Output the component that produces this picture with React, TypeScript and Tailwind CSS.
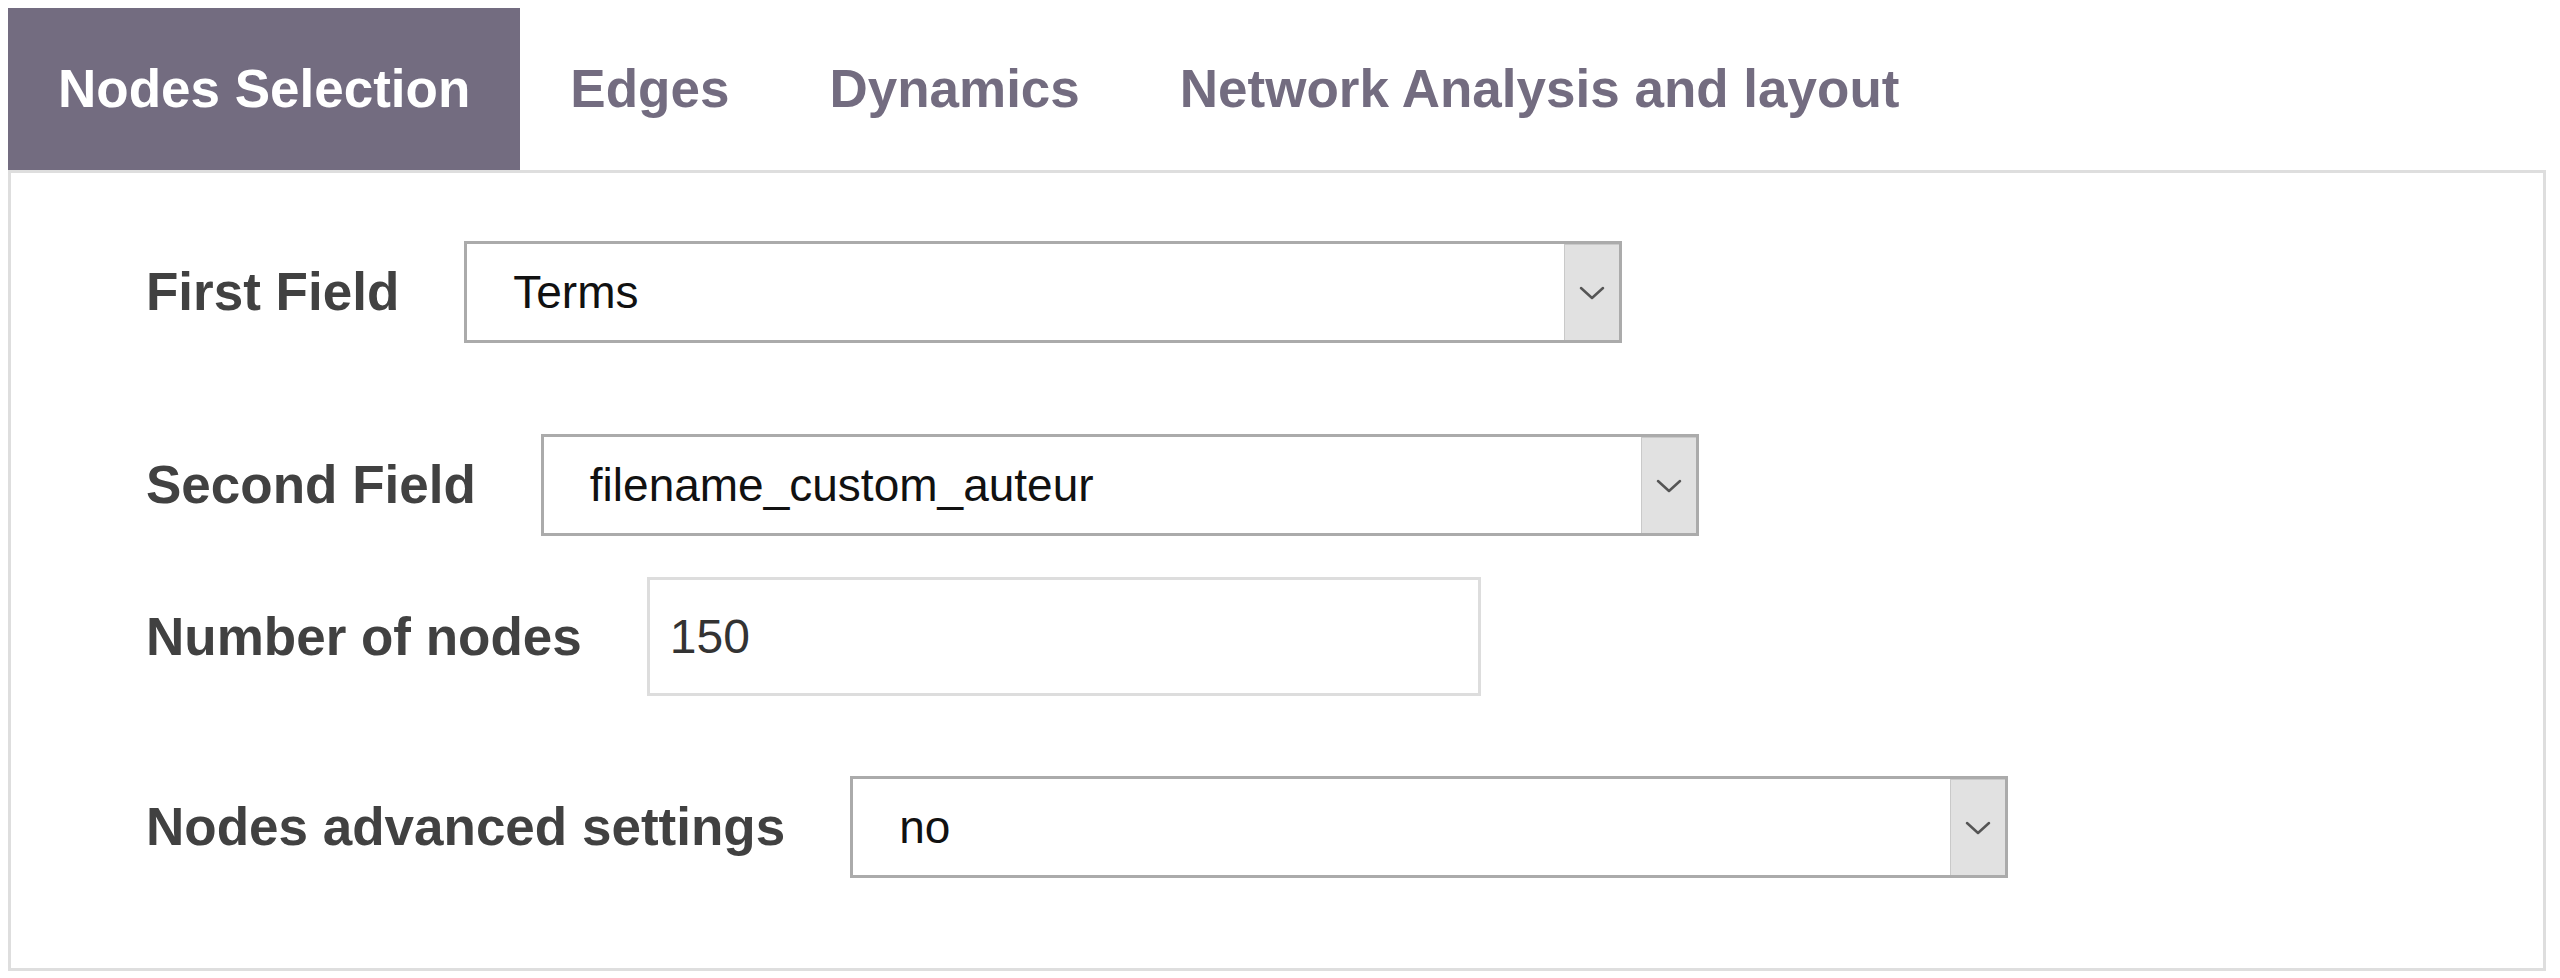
import React from "react";

const font = { fontFamily: '"Liberation Sans", Arial, sans-serif' };

function Chevron() {
  return (
    <svg width="28" height="16" viewBox="0 0 28 16" fill="none">
      <path d="M3 3 L14 13 L25 3" stroke="#555555" strokeWidth="2.5" strokeLinecap="round" strokeLinejoin="round" />
    </svg>
  );
}

function Select({ value }: { value: string }) {
  return (
    <div className="flex h-[102px] w-[1158px] border-[3px] border-[#ababab] bg-white">
      <div className="flex flex-1 items-center pl-[46px] text-[46px] text-[#111111]">{value}</div>
      <div className="flex h-full w-[55px] items-center justify-center border-l border-t border-[#c9c9c9] bg-[#e1e1e1]">
        <Chevron />
      </div>
    </div>
  );
}

function Label({ children }: { children: React.ReactNode }) {
  return <div className="text-[53px] font-bold text-[#414141] whitespace-nowrap">{children}</div>;
}

export default function App() {
  const tabs = ["Nodes Selection", "Edges", "Dynamics", "Network Analysis and layout"];
  return (
    <div className="min-h-[978px] w-full bg-white pl-[8px] pt-[8px]" style={font}>
      <div className="flex h-[162px]">
        {tabs.map((t, i) => (
          <div
            key={t}
            className={
              i === 0
                ? "flex items-center bg-[#736c80] px-[50px] text-[53px] font-bold text-white whitespace-nowrap"
                : "flex items-center px-[50px] text-[53px] font-bold text-[#736c80] whitespace-nowrap"
            }
          >
            {t}
          </div>
        ))}
      </div>
      <div className="w-[2538px] border-[3px] border-[#dedede] pb-[90px] pl-[135px] pt-[68px]">
        <div className="flex items-center gap-[65px]">
          <Label>First Field</Label>
          <Select value="Terms" />
        </div>
        <div className="mt-[91px] flex items-center gap-[65px]">
          <Label>Second Field</Label>
          <Select value="filename_custom_auteur" />
        </div>
        <div className="mt-[41px] flex items-center gap-[65px]">
          <Label>Number of nodes</Label>
          <div className="flex h-[119px] w-[834px] items-center border-[3px] border-[#dddddd] pl-[20px] text-[48px] text-[#333333]">
            150
          </div>
        </div>
        <div className="mt-[80px] flex items-center gap-[65px]">
          <Label>Nodes advanced settings</Label>
          <Select value="no" />
        </div>
      </div>
    </div>
  );
}
